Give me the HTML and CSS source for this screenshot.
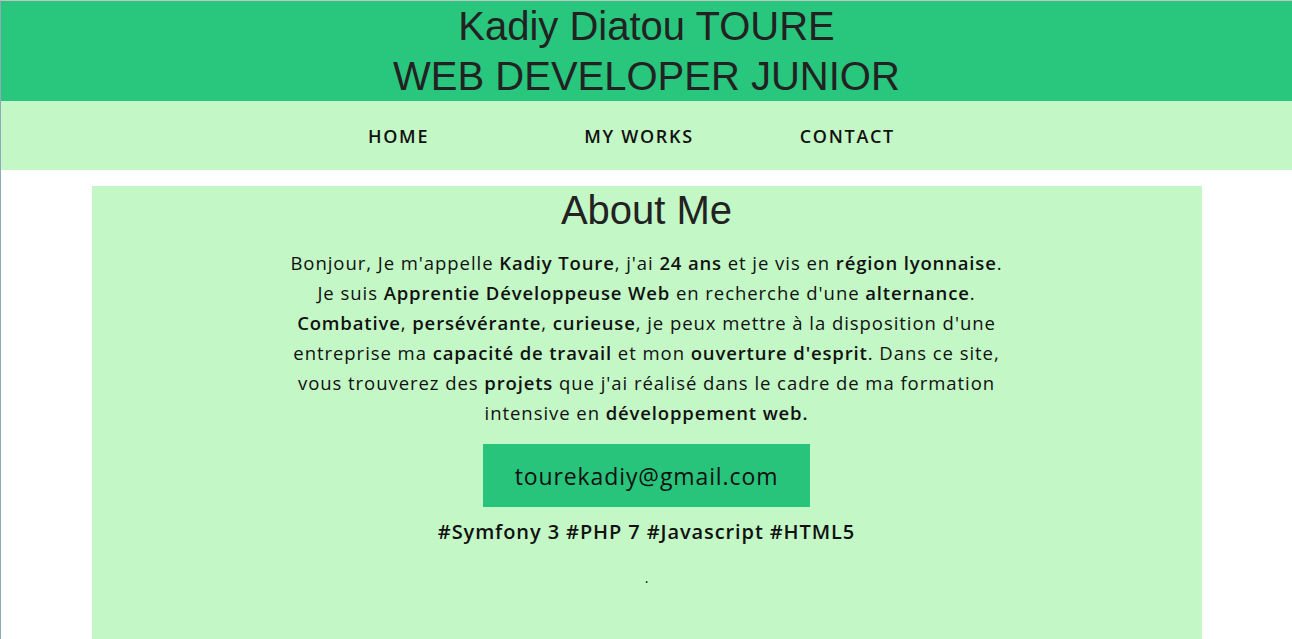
FILE: index.html
```html
<!DOCTYPE html>
<html lang="fr">
<head>
<meta charset="utf-8">
<title>Kadiy Diatou TOURE</title>
<link rel="stylesheet" href="styles.css">
</head>
<body>
<header class="site-header">
  <h1 class="title">Kadiy Diatou TOURE<br>WEB DEVELOPER JUNIOR</h1>
</header>
<nav class="site-nav">
  <a class="nav-link nav-home" href="#">HOME</a>
  <a class="nav-link nav-works" href="#">MY WORKS</a>
  <a class="nav-link nav-contact" href="#">CONTACT</a>
</nav>
<main class="about">
  <h2 class="about-title">About Me</h2>
  <p class="about-text">Bonjour, Je m'appelle <b>Kadiy Toure</b>, j'ai <b>24 ans</b> et je vis en <b>région lyonnaise</b>.<br>
  Je suis <b>Apprentie Développeuse Web</b> en recherche d'une <b>alternance</b>.<br>
  <b>Combative</b>, <b>persévérante</b>, <b>curieuse</b>, je peux mettre à la disposition d'une<br>
  entreprise ma <b>capacité de travail</b> et mon <b>ouverture d'esprit</b>. Dans ce site,<br>
  vous trouverez des <b>projets</b> que j'ai réalisé dans le cadre de ma formation<br>
  intensive en <b>développement web.</b></p>
  <a class="email" href="#">tourekadiy@gmail.com</a>
  <p class="tags">#Symfony 3 #PHP 7 #Javascript #HTML5</p>
  <p class="dot">.</p>
</main>
</body>
</html>
```
FILE: styles.css
```css
html, body {
  margin: 0;
  padding: 0;
  background: #ffffff;
}
body {
  border-top: 1px solid #c4c4c4;
  border-left: 1px solid #8eaab8;
  min-height: 638px;
  box-sizing: border-box;
  font-family: "Open Sans", "Liberation Sans", sans-serif;
  color: #111;
}
.site-header {
  background: #29c67d;
  height: 100px;
  text-align: center;
}
.title {
  margin: 0;
  font-family: "Liberation Sans", Arial, sans-serif;
  font-weight: normal;
  font-size: 40px;
  line-height: 50px;
  color: #222;
}
.site-nav {
  background: #c3f7c5;
  height: 69px;
  display: flex;
  justify-content: center;
  align-items: center;
  padding-right: 30px;
  box-sizing: border-box;
}
.nav-link {
  font-size: 18px;
  font-weight: 600;
  color: #111;
  text-decoration: none;
  letter-spacing: 1.7px;
}
.nav-works {
  margin-left: 155px;
}
.nav-contact {
  margin-left: 106px;
}
.about {
  width: 1110px;
  margin: 16px auto 0;
  background: #c3f7c5;
  min-height: 453px;
  display: flex;
  flex-direction: column;
  align-items: center;
  text-align: center;
}
.about-title {
  margin: 0;
  font-family: "Liberation Sans", Arial, sans-serif;
  font-weight: normal;
  font-size: 40px;
  line-height: 48px;
  color: #222;
}
.about-text {
  margin: 14px 0 0;
  font-size: 18.5px;
  font-weight: 400;
  letter-spacing: 0.95px;
  line-height: 30px;
  color: #111;
  white-space: nowrap;
}
.about-text b {
  font-weight: 600;
  letter-spacing: 0.85px;
}
.email {
  margin-top: 16px;
  width: 327px;
  height: 63px;
  display: flex;
  align-items: center;
  justify-content: center;
  background: #28c47c;
  color: #111;
  font-size: 23px;
  font-weight: 500;
  letter-spacing: 0.9px;
  text-decoration: none;
}
.tags {
  margin: 10px 0 0;
  font-size: 20px;
  line-height: 30px;
  font-weight: 600;
  letter-spacing: 0.9px;
}
.dot {
  margin: 21px 0 0;
  font-size: 14px;
  line-height: 20px;
}
```
